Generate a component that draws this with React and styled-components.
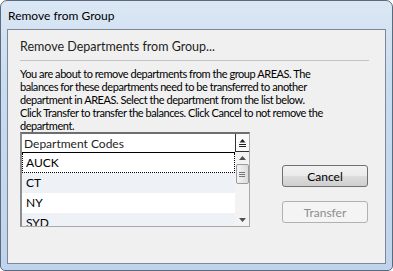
import React from 'react'
import styled, { createGlobalStyle } from 'styled-components'

const GlobalStyle = createGlobalStyle`
  html, body { margin: 0; padding: 0; background: #ffffff; }
  body { font-family: Lato, "Liberation Sans", sans-serif; }
`

const codes = ['AUCK', 'CT', 'NY', 'SYD']

const lines = [
    'You are about to remove departments from the group AREAS. The',
    'balances for these departments need to be transferred to another',
    'department in AREAS. Select the department from the list below.',
    'Click Transfer to transfer the balances. Click Cancel to not remove the',
    'department.',
]

const App = () => {
    return (
        <>
            <GlobalStyle />
            <Window>
                <TitleBar>Remove from Group</TitleBar>
                <Client>
                    <Heading>Remove Departments from Group...</Heading>
                    <Separator />
                    <Message>
                        {lines.map(line => (
                            <Line key={line}>{line}</Line>
                        ))}
                    </Message>
                    <Body>
                        <ListBox>
                            <ListMain>
                                <HeaderRow>Department Codes</HeaderRow>
                                {codes.map((code, i) => (
                                    <Row key={code} $alt={i % 2 === 1} $focused={i === 0}>{code}</Row>
                                ))}
                            </ListMain>
                            <ScrollCol>
                                <CornerButton>
                                    <svg width="9" height="9" viewBox="0 0 9 9">
                                        <path d="M4.5 1 L7.5 4.5 L1.5 4.5 Z" fill="#222" />
                                        <rect x="1" y="6" width="7" height="1" fill="#222" />
                                        <rect x="1" y="8" width="7" height="1" fill="#222" />
                                    </svg>
                                </CornerButton>
                                <Track>
                                    <ArrowBox>
                                        <svg width="7" height="4" viewBox="0 0 7 4">
                                            <path d="M3.5 0 L7 4 L0 4 Z" fill="#4d5055" />
                                        </svg>
                                    </ArrowBox>
                                    <Thumb>
                                        <Grip /><Grip /><Grip />
                                    </Thumb>
                                    <Spacer />
                                    <ArrowBox>
                                        <svg width="7" height="4" viewBox="0 0 7 4">
                                            <path d="M0 0 L7 0 L3.5 4 Z" fill="#4d5055" />
                                        </svg>
                                    </ArrowBox>
                                </Track>
                            </ScrollCol>
                        </ListBox>
                        <Buttons>
                            <Button>Cancel</Button>
                            <Button disabled>Transfer</Button>
                        </Buttons>
                    </Body>
                </Client>
            </Window>
        </>
    )
}

export default App

const Window = styled.div`
display: flex;
flex-direction: column;
width: 393px;
height: 271px;
box-sizing: border-box;
border: 1px solid #5b6b7e;
border-radius: 7px 7px 5px 5px;
background: linear-gradient(180deg, #dbe7f4 0%, #c9dcf0 30%, #bfd4ec 100%);
`

const TitleBar = styled.div`
height: 27px;
display: flex;
align-items: center;
padding-left: 7px;
padding-top: 1px;
font-size: 12px;
color: #000;
`

const Client = styled.div`
flex: 1;
margin: 0 6px 6px 6px;
border: 1px solid #7c8898;
background: #f0f0f0;
display: flex;
flex-direction: column;
padding: 9px 12px 0 12px;
`

const Heading = styled.div`
font-size: 12.5px;
color: #1e1e1e;
line-height: 16px;
`

const Separator = styled.div`
height: 1px;
background: #c3c3c3;
margin: 5px 4px 0 0;
`

const Message = styled.div`
margin-top: 6px;
font-size: 11px;
letter-spacing: -0.45px;
line-height: 13px;
color: #000;
`

const Line = styled.div`
white-space: nowrap;
`

const Body = styled.div`
display: flex;
margin-top: 0;
`

const ListBox = styled.div`
display: flex;
width: 230px;
height: 95px;
box-sizing: border-box;
border: 1px solid #a9a9a9;
border-top: 2px solid #6e6e6e;
border-left: 2px solid #8e8e8e;
background: #fff;
overflow: hidden;
`

const ListMain = styled.div`
flex: 1;
display: flex;
flex-direction: column;
`

const HeaderRow = styled.div`
height: 18px;
flex-shrink: 0;
display: flex;
align-items: center;
padding-left: 2px;
font-size: 12px;
color: #1e1e1e;
border-bottom: 1px solid #000;
background: #fff;
`

const Row = styled.div`
height: 20px;
flex-shrink: 0;
display: flex;
align-items: center;
padding-left: 3px;
box-sizing: border-box;
font-size: 12px;
color: #000;
background: ${p => (p.$alt ? '#eef1f5' : '#ffffff')};
border: 1px dotted ${p => (p.$focused ? '#000' : 'transparent')};
border-top: none;
`

const ScrollCol = styled.div`
width: 14px;
display: flex;
flex-direction: column;
`

const CornerButton = styled.div`
height: 18px;
flex-shrink: 0;
box-sizing: border-box;
border-left: 1px solid #333;
border-bottom: 1px solid #333;
display: flex;
align-items: center;
justify-content: center;
background: #fbfbfb;
`

const Track = styled.div`
flex: 1;
display: flex;
flex-direction: column;
align-items: center;
background: #f3f3f3;
`

const ArrowBox = styled.div`
height: 12px;
width: 100%;
display: flex;
align-items: center;
justify-content: center;
`

const Thumb = styled.div`
width: 13px;
height: 20px;
box-sizing: border-box;
border: 1px solid #9a9a9a;
border-radius: 2px;
background: linear-gradient(90deg, #f4f4f4, #dcdcdc);
display: flex;
flex-direction: column;
align-items: center;
justify-content: center;
gap: 1px;
`

const Grip = styled.div`
width: 6px;
height: 1px;
background: #777;
`

const Spacer = styled.div`
flex: 1;
`

const Buttons = styled.div`
display: flex;
flex-direction: column;
gap: 14px;
margin-left: 32px;
margin-top: 33px;
`

const Button = styled.button`
width: 86px;
height: 22px;
padding: 0;
font-family: Lato, "Liberation Sans", sans-serif;
font-size: 12px;
color: ${p => (p.disabled ? '#8d8d8d' : '#000')};
border: 1px solid ${p => (p.disabled ? '#adb2b5' : '#707070')};
border-radius: 3px;
background: ${p => (p.disabled ? '#f4f4f4' : 'linear-gradient(180deg, #f2f2f2 0%, #ebebeb 50%, #dddddd 51%, #cfcfcf 100%)')};
`
